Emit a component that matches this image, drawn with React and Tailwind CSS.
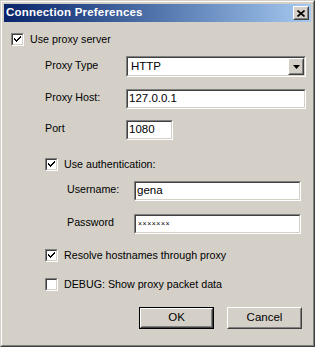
import React from 'react';

const Sunken = ({ className = '', children }) => (
  <div className={`border border-t-[#808080] border-l-[#808080] border-b-white border-r-white ${className}`}>
    <div className="h-full border border-t-[#404040] border-l-[#404040] border-b-[#d4d0c8] border-r-[#d4d0c8] bg-white flex items-center">
      {children}
    </div>
  </div>
);

const Raised = ({ className = '', children }) => (
  <div className={`border border-t-white border-l-white border-b-[#404040] border-r-[#404040] ${className}`}>
    <div className="h-full border border-t-[#d4d0c8] border-l-[#d4d0c8] border-b-[#808080] border-r-[#808080] bg-[#d4d0c8] flex items-center justify-center">
      {children}
    </div>
  </div>
);

const Check = ({ checked, label, className = '' }) => (
  <div className={`flex items-center h-[13px] ${className}`}>
    <Sunken className="w-[13px] h-[13px] shrink-0">
      {checked && (
        <svg width="9" height="9" viewBox="0 0 9 9" className="block">
          <path d="M1 3.5 L3.5 6 L8 1.5" fill="none" stroke="#000" strokeWidth="2" shapeRendering="crispEdges" />
        </svg>
      )}
    </Sunken>
    <span className="ml-[6px] whitespace-nowrap">{label}</span>
  </div>
);

const FieldRow = ({ label, labelWidth, className = '', children }) => (
  <div className={`flex items-center ${className}`}>
    <span className="shrink-0 -mt-[3px]" style={{ width: labelWidth }}>{label}</span>
    {children}
  </div>
);

const App = () => {
  return (
    <div className="w-[315px] h-[347px] bg-[#d4d0c8] text-black text-[10.7px] font-['Liberation_Sans',Arial,sans-serif] leading-none">
      {/* window frame */}
      <div className="w-full h-full border border-t-[#d4d0c8] border-l-[#d4d0c8] border-b-[#404040] border-r-[#404040]">
        <div className="w-full h-full border border-t-white border-l-white border-b-[#808080] border-r-[#808080] p-[2px] flex flex-col">
          {/* title bar */}
          <div className="h-[18px] flex items-center justify-between bg-linear-to-r from-[#0a246a] to-[#a6caf0] pl-[2px] pr-[2px]">
            <span className="text-white font-bold text-[11.5px] tracking-[0.2px]">Connection Preferences</span>
            <Raised className="w-[16px] h-[14px]">
              <svg width="8" height="7" viewBox="0 0 8 7" className="block">
                <path d="M0.5 0.5 L7.5 6.5 M7.5 0.5 L0.5 6.5" stroke="#000" strokeWidth="1.6" />
              </svg>
            </Raised>
          </div>

          <div className="flex flex-col pl-[7px]">
            <Check checked label="Use proxy server" className="mt-[11px]" />

            <div className="pl-[34px] flex flex-col">
              <FieldRow label="Proxy Type" labelWidth={81} className="mt-[10px]">
                <Sunken className="w-[180px] h-[21px]">
                  <span className="pl-[3px] flex-1 text-[11.5px]">HTTP</span>
                  <Raised className="w-[16px] h-[17px] mr-0">
                    <svg width="7" height="4" viewBox="0 0 7 4" className="block">
                      <path d="M0 0 H7 L3.5 4 Z" fill="#000" />
                    </svg>
                  </Raised>
                </Sunken>
              </FieldRow>

              <FieldRow label="Proxy Host:" labelWidth={81} className="mt-[12px]">
                <Sunken className="w-[180px] h-[20px]">
                  <span className="pl-[1px] text-[11.5px]">127.0.0.1</span>
                </Sunken>
              </FieldRow>

              <FieldRow label="Port" labelWidth={81} className="mt-[11px]">
                <Sunken className="w-[47px] h-[20px]">
                  <span className="pl-[1px] text-[11.5px]">1080</span>
                </Sunken>
              </FieldRow>

              <Check checked label="Use authentication:" className="mt-[18px]" />

              <div className="pl-[22px] flex flex-col">
                <FieldRow label="Username:" labelWidth={67} className="mt-[10px]">
                  <Sunken className="w-[167px] h-[20px]">
                    <span className="pl-[1px] text-[11.5px]">gena</span>
                  </Sunken>
                </FieldRow>

                <FieldRow label="Password" labelWidth={67} className="mt-[13px]">
                  <Sunken className="w-[167px] h-[20px]">
                    <span className="pl-[2px] text-[7px] tracking-[0.5px] -mt-[2px]">×××××××</span>
                  </Sunken>
                </FieldRow>
              </div>

              <Check checked label="Resolve hostnames through proxy" className="mt-[15px]" />
              <Check label="DEBUG: Show proxy packet data" className="mt-[16px]" />
            </div>
          </div>

          <div className="flex justify-end gap-[13px] mt-[16px] pr-[9px]">
            <div className="border border-black w-[75px] h-[22px]">
              <Raised className="w-full h-full">
                <span className="text-[11.5px]">OK</span>
              </Raised>
            </div>
            <Raised className="w-[75px] h-[22px]">
              <span className="text-[11.5px]">Cancel</span>
            </Raised>
          </div>
        </div>
      </div>
    </div>
  );
};

export default App;
